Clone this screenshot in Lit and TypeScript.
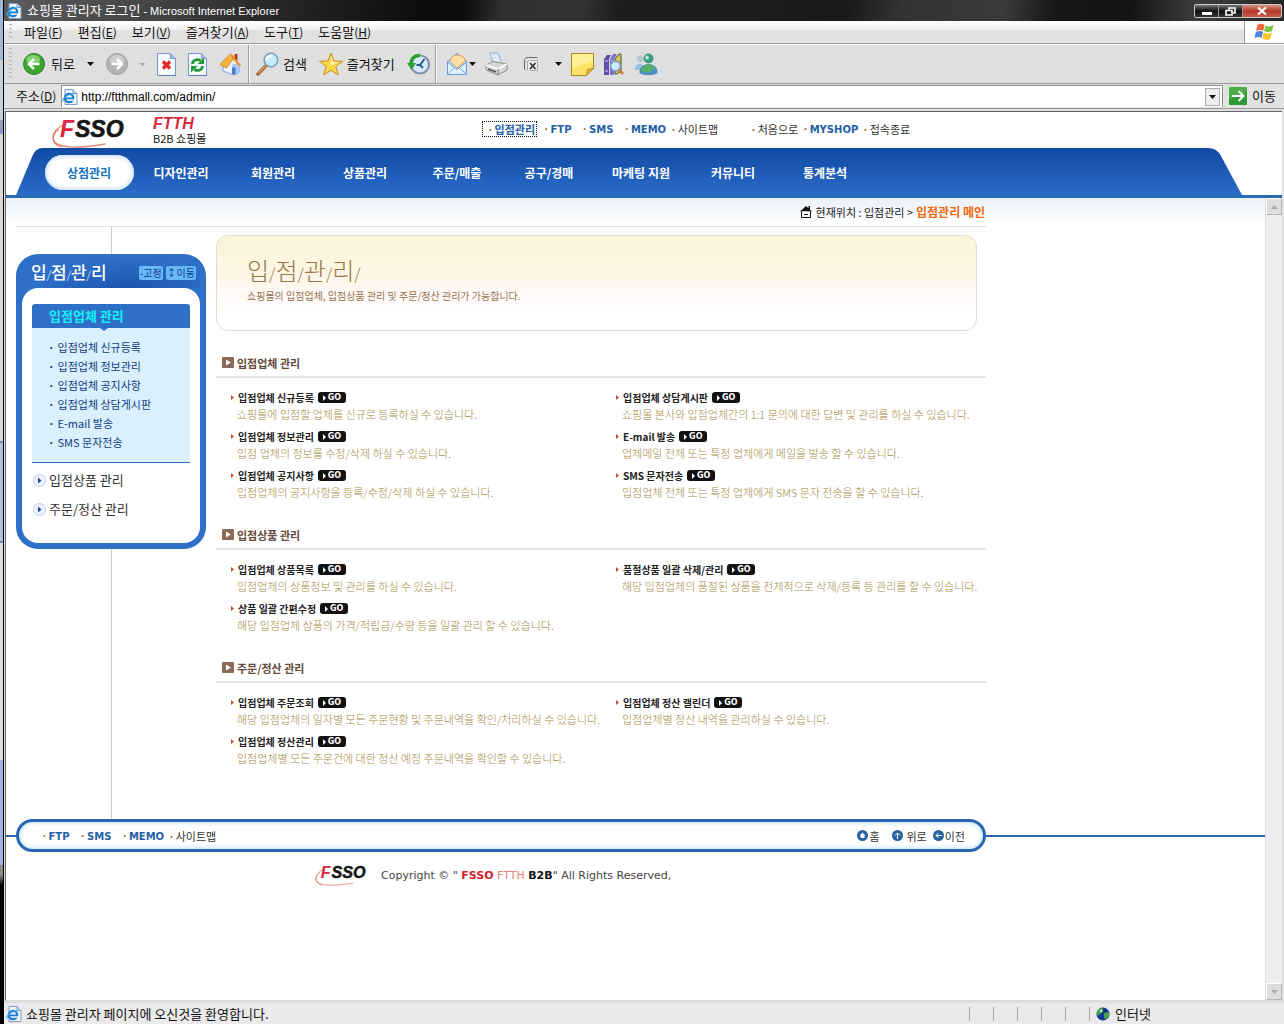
import { LitElement, html, css, svg, TemplateResult } from "lit";
import { customElement } from "lit/decorators.js";

interface Entry { title: string; text: string; }
interface Section { title: string; left: Entry[]; right: Entry[]; }

const SECTIONS: Section[] = [
  {
    title: "입점업체 관리",
    left: [
      { title: "입점업체 신규등록", text: "쇼핑몰에 입점할 업체를 신규로 등록하실 수 있습니다." },
      { title: "입점업체 정보관리", text: "입점 업체의 정보를 수정/삭제 하실 수 있습니다." },
      { title: "입점업체 공지사항", text: "입점업체의 공지사항을 등록/수정/삭제 하실 수 있습니다." },
    ],
    right: [
      { title: "입점업체 상담게시판", text: "쇼핑몰 본사와 입점업체간의 1:1 문의에 대한 답변 및 관리를 하실 수 있습니다." },
      { title: "E-mail 발송", text: "업체메일 전체 또는 특정 업체에게 메일을 발송 할 수 있습니다." },
      { title: "SMS 문자전송", text: "입점업체 전체 또는 특정 업체에게 SMS 문자 전송을 할 수 있습니다." },
    ],
  },
  {
    title: "입점상품 관리",
    left: [
      { title: "입점업체 상품목록", text: "입점업체의 상품정보 및 관리를 하실 수 있습니다." },
      { title: "상품 일괄 간편수정", text: "해당 입점업체 상품의 가격/적립금/수량 등을 일괄 관리 할 수 있습니다." },
    ],
    right: [
      { title: "품절상품 일괄 삭제/관리", text: "해당 입점업체의 품절된 상품을 전체적으로 삭제/등록 등 관리를 할 수 있습니다." },
    ],
  },
  {
    title: "주문/정산 관리",
    left: [
      { title: "입점업체 주문조회", text: "해당 입점업체의 일자별 모든 주문현황 및 주문내역을 확인/처리하실 수 있습니다." },
      { title: "입점업체 정산관리", text: "입점업체별 모든 주문건에 대한 정산 예정 주문내역을 확인할 수 있습니다." },
    ],
    right: [
      { title: "입점업체 정산 캘린더", text: "입점업체별 정산 내역을 관리하실 수 있습니다." },
    ],
  },
];

const MENUS: [string, string][] = [["파일", "F"], ["편집", "E"], ["보기", "V"], ["즐겨찾기", "A"], ["도구", "T"], ["도움말", "H"]];
const NAV = ["상점관리", "디자인관리", "회원관리", "상품관리", "주문/매출", "공구/경매", "마케팅 지원", "커뮤니티", "통계분석"];
const SIDE = ["입점업체 신규등록", "입점업체 정보관리", "입점업체 공지사항", "입점업체 상담게시판", "E-mail 발송", "SMS 문자전송"];

const icon = (w: number, h: number, body: TemplateResult, box = `0 0 ${w} ${h}`) =>
  html`<svg class="icon" width=${w} height=${h} viewBox=${box} aria-hidden="true">${body}</svg>`;

const iePage = icon(16, 16, svg`
  <path d="M3 .5h8l4 4v11H3z" fill="#eef6ff" stroke="#7d9cc9"/><path d="M11 .5v4h4" fill="#b9d0ee" stroke="#7d9cc9"/>
  <circle cx="7" cy="9" r="4.2" fill="none" stroke="#1b7fd0" stroke-width="2.2"/><path d="M3.5 9.4h7.6" stroke="#1b7fd0" stroke-width="1.8"/>
  <path d="M8.5 11h4" stroke="#eef6ff" stroke-width="1.4"/><path d="M.8 12.5C.5 9 7 4.200 13 4.500" fill="none" stroke="#4aa8ea" stroke-width="1.200"/>`);
const back = icon(22, 22, svg`<circle cx="11" cy="11" r="10.500" fill="#3da52f" stroke="#2c8426"/><ellipse cx="10" cy="6.500" rx="7" ry="4.500" fill="#9bdc83" opacity=".75"/>
  <path d="M16.500 11H6.500M11 6l-5 5 5 5" fill="none" stroke="#fff" stroke-width="2.600"/>`);
const forward = icon(22, 22, svg`<circle cx="11" cy="11" r="10.500" fill="#b4b4b4" stroke="#a0a0a0"/><ellipse cx="11" cy="7" rx="7" ry="5" fill="#cfcfcf"/>
  <path d="M5.500 11h10M11 6l5 5-5 5" fill="none" stroke="#fff" stroke-width="2.600"/>`);
const sheet = svg`<path d="M.5.500h13l5 5v17H.5z" fill="#f4f8ff" stroke="#7f93cf"/><path d="M13.500.500v5h5" fill="#a9bdea" stroke="#7f93cf"/><path d="M1 22.500h18" stroke="#5f79c0"/>`;
const stop = icon(19, 23, svg`${sheet}<path d="M6 8.500l7 7M13 8.500l-7 7" stroke="#e2261c" stroke-width="3.200"/>`);
const refresh = icon(19, 23, svg`${sheet}<path d="M4.500 11c0-4 5-5.500 8-3.500M14.500 13c0 4-5 5.500-8 3.500" fill="none" stroke="#1f9a35" stroke-width="2.800"/>
  <path d="M9.500 11h6.500v-6.500zM9.500 13h-6.500v6.500z" fill="#1f9a35"/>`);
const home = icon(23, 24, svg`<path d="M15.500 2h3v6h-3z" fill="#b5402a"/><path d="M4 11l8-7 8 8v9l-6 2-10-4z" fill="#e9f2ff" stroke="#7f9fd6"/>
  <path d="M13 12.500l7-1v10l-6 1.500z" fill="#a8c6f2"/><path d="M.8 12.500L11.500 2l4 3-8 11z" fill="#f7b444" stroke="#d48a25"/><path d="M11.500 2.500L15 4.500l7.300 9-2.300.500-6.500-7z" fill="#f08d2c"/>
  <path d="M13 15.500h3.500V23L13 22z" fill="#4b76c8"/>`);
const search = icon(23, 24, svg`<path d="M10 13.500L2 22" stroke="#a8683a" stroke-width="3.600" stroke-linecap="round"/><path d="M9.500 13.500L2.500 21" stroke="#dba271" stroke-width="1.400"/>
  <circle cx="15" cy="8" r="6.800" fill="#c8ecfb" stroke="#7c9fc2" stroke-width="1.600"/><path d="M10.500 8a5 5 0 015-4.500" stroke="#fff" stroke-width="2" fill="none"/>`);
const star = icon(24, 24, svg`<path d="M12 1l3 8 8.500.300-6.700 5.200L19.300 23 12 18.200 4.700 23l2.500-8.500L.5 9.300 9 9z" fill="#ffd84a" stroke="#c88d1e"/><path d="M12 4l2 6 5 .5-7 3z" fill="#fff2a4"/>`);
const history = icon(23, 23, svg`<circle cx="13" cy="11.500" r="9" fill="#d5eaf9" stroke="#8795a8" stroke-width="2.200"/><path d="M17.500 6L13 12h-3.500M13 12l3 3" fill="none" stroke="#26588f" stroke-width="1.800"/>
  <path d="M13 2.500C7 2 4 6 4 11" fill="none" stroke="#2c9f31" stroke-width="3.600"/><path d="M0 10h9l-4.500 7z" fill="#2c9f31"/>`);
const mail = icon(22, 24, svg`<path d="M1.500 9.500L11 1.500l9.500 8v13h-19z" fill="#bcd9fa" stroke="#6b86c9"/><path d="M4 9c1-5 6-7 11-5 3 1 4 3 4 5l-8 7z" fill="#fde2a8" stroke="#e0a650"/>
  <path d="M1.500 10l9.500 7.500 9.500-7.500v12.500h-19z" fill="#dcefff" stroke="#6b9ade"/><path d="M2 22l7-7M20 22l-7-7" stroke="#7da8e2"/>`);
const printer = icon(23, 24, svg`<path d="M5 1h8l4 10H8z" fill="#dceafc" stroke="#98abd0"/><path d="M1 13l7-3.500L22 12v6l-9 5L1 18z" fill="#d6d6d6" stroke="#8f8f8f"/>
  <path d="M1 13l12 4 9-5" fill="none" stroke="#fff" stroke-width="1.500"/><path d="M13 17v6" stroke="#777"/><path d="M3 17l8 3" stroke="#555" stroke-width="1.500"/>`);
const edit = icon(16, 16, svg`<path d="M1.500 14V5c0-3 1.500-3.500 4-3.500h9" fill="none" stroke="#666"/><path d="M4.500 14V7c0-2 1-2.500 3-2.500h7v10H7" fill="#ececec" stroke="#aaa"/><path d="M7 7l5.500 6M12.500 7L7 13" stroke="#333" stroke-width="1.700"/>`);
const note = icon(23, 23, svg`<path d="M.5.500h22v15l-7 7H.5z" fill="#ffe468" stroke="#a98a20"/><path d="M1 1h21v7L1 15z" fill="#fff2a2" opacity=".8"/><path d="M15.500 22.500l1-6 6-1z" fill="#f0b93c" stroke="#a98a20"/>`);
const books = icon(22, 23, svg`<path d="M1 6l3-4h4L6 6v16H1z" fill="#5d4fb0"/><path d="M7 6l3-5h4l-3 5v16H7z" fill="#7c6fd0"/><path d="M2 8h3M2 18h3M8 8h3" stroke="#d8d2ff"/>
  <path d="M12 6l4-5h2v17l-4 3h-2z" fill="#d8c552" stroke="#4c4a32"/><circle cx="12.500" cy="13" r="5" fill="#cdeafb" stroke="#7293c0" stroke-width="1.500"/><path d="M16 17l4 4" stroke="#c88a3a" stroke-width="3"/>`);
const people = icon(24, 23, svg`<circle cx="6" cy="6" r="3.500" fill="#b9c4cf"/><path d="M1 17c-1-8 10-8 9 0z" fill="#8fc0e2"/><circle cx="14.500" cy="5.500" r="5" fill="#3f9a85"/>
  <path d="M5.500 20c-1-12 19-12 18 0-4 3-14 3-18 0z" fill="#4a90c6"/><path d="M7 18c1-8 11-9 14-3-3 4-9 6-14 3z" fill="#57b06a"/><circle cx="13" cy="4.500" r="2" fill="#b6e3c3"/>`);
const flag = icon(22, 20, svg`<path d="M3.500 3c3-2 5-1 7 0L9.200 9C7 7.700 5 7.500 2 9z" fill="#ee6a3d"/><path d="M11.500 3.500c3 1.500 5 1 8-.5L18 9c-3 1.500-5 1.500-8 0z" fill="#7cc243"/>
  <path d="M1.800 10c3-1.500 5-1 7.200 0L7.500 16c-2-1-4-1.500-7 0z" fill="#4a87df"/><path d="M9.800 10.500c3 1.500 5 1.500 8 0L16.200 17c-3 1.500-5 1-8-.5z" fill="#f9c727"/>`);
const go = icon(18, 18, svg`<rect width="18" height="18" rx="1" fill="#2f9a37"/><path d="M0 0h18v5L0 12z" fill="#6cc060" opacity=".5"/><path d="M3 9h11M9.500 4l5 5-5 5" fill="none" stroke="#fff" stroke-width="2"/>`);
const globe = icon(14, 14, svg`<circle cx="7" cy="7" r="6.500" fill="#12349a"/><path d="M3 2c3-2 5-1 4 2S4 6 3 8 .5 7 .8 5zM8 6l5-1c.5 3-1 6-3 7S8 9 8 6z" fill="#49a83c"/><circle cx="5" cy="4" r="1.200" fill="#b8e6f5"/>`);
const houseMark = icon(12, 12, svg`<path d="M0 5.500L6 0l6 5.500zM8.500 0H10v4H8.500z" fill="#111"/><path d="M1.500 5.500v6h9v-6" fill="#fff" stroke="#111"/><path d="M4 8.500h4" stroke="#111"/>`);
const caret = icon(7, 4, svg`<path d="M0 0h7L3.500 4z" fill="#111"/>`);
const caretDim = icon(5, 3, svg`<path d="M0 0h5L2.500 3z" fill="#a2a2a2"/>`);
const boxArrow = icon(12, 11, svg`<rect width="12" height="11" rx="1" fill="#8b6b58"/><path d="M4 2.500l5 3-5 3z" fill="#fff"/>`);
const roundArrow = icon(13, 13, svg`<circle cx="6.500" cy="6.500" r="6" fill="#eef3ff" stroke="#bccbee"/><path d="M5 3.500l3.500 3L5 9.500z" fill="#20449c"/>`);
const redMark = icon(3, 5, svg`<path d="M0 0l3 2.500L0 5z" fill="#d04a35"/>`);
const dotHome = icon(11, 11, svg`<circle cx="5.500" cy="5.500" r="5.500" fill="#24619f"/><path d="M2.500 5.500l3-3 3 3h-1v2.500h-4V5.500z" fill="#fff"/>`);
const dotUp = icon(11, 11, svg`<circle cx="5.500" cy="5.500" r="5.500" fill="#24619f"/><path d="M5.500 9V3M3 5.500L5.500 3 8 5.500" fill="none" stroke="#fff"/>`);
const dotLeft = icon(11, 11, svg`<circle cx="5.500" cy="5.500" r="5.500" fill="#24619f"/><path d="M9 5.500H3M5.500 3L3 5.500 5.500 8" fill="none" stroke="#fff"/>`);

const fsso = (w: number, h: number) => html`
  <svg class="icon" width=${w} height=${h} viewBox="0 0 76 34" role="img" aria-label="FSSO">
    <path d="M14 7C5 10 0 16 1.500 23c2 8 24 9 52 4" fill="none" stroke="#e58b7d" stroke-width="1.300"/>
    <path d="M7 12C1 16 0 20 2 25c1 2 4 4 8 5" fill="none" stroke="#e0604f" stroke-width="1.200" opacity=".7"/>
    <text x="8" y="20" font-family="Liberation Sans, sans-serif" font-size="23" font-weight="700" font-style="italic"><tspan fill="#de2440">F</tspan><tspan x="23" fill="#151515" stroke="#151515" stroke-width=".6">SSO</tspan></text>
  </svg>`;

@customElement("app-root")
export class AppRoot extends LitElement {
  static styles = css`
    :host { display: block; font-family: "Liberation Sans", "Noto Sans CJK KR", sans-serif; font-size: 13px; line-height: 16px; color: #111; }
    * { box-sizing: border-box; }
    button { font: inherit; color: inherit; background: none; border: 0; padding: 0; margin: 0; }
    a { color: inherit; text-decoration: none; }
    ul, h1, h2, h3, p { margin: 0; padding: 0; list-style: none; font-weight: inherit; font-size: inherit; }
    .icon { display: block; flex: none; }
    .desktop { display: grid; grid-template-columns: 4px 1fr; min-height: 100vh; }
    .edge { border-right: 1px solid #000; background: linear-gradient(#9eb9de 0 60px, #c4cfdf 60px 120px, #8f9cc8 120px 134px, #d9d9d6 134px 441px, #6c8cc8 441px 443px, #a9c3df 443px 541px, #6c8cc8 541px 543px, #dfdfda 543px 760px, #9db5e3 760px 865px, #888 865px 875px, #000 885px); }
    .window { display: flex; flex-direction: column; min-width: 0; background: #dfdfdf; }

    .title { display: flex; align-items: center; height: 21px; padding: 0 2px 0 2px; gap: 5px; color: #fff; font-family: "Noto Sans CJK KR", sans-serif;
      background: linear-gradient(100deg, #5c5c5c 0, #444 12%, #2a2a2a 20%, #0c0c0c 33%, #0c0c0c 36%, #303030 39%, #333 45%, #1d1d1d 48%, #1a1a1a 66%, #333 70%, #3a3a3a 78%, #171717 82%, #141414 88%, #3c3c3c 93%, #262626); }
    .title h1 { flex: 1; white-space: nowrap; }
    .title small { font: 11px/16px "Liberation Sans", sans-serif; }
    .winbtns { display: flex; align-self: flex-start; margin-top: 4px; border: 1px solid #c9c9c9; border-radius: 2px; }
    .winbtns button { width: 24px; height: 12px; display: grid; place-items: center; background: linear-gradient(#777, #111 50%, #333); border-right: 1px solid #999; }
    .winbtns .close { width: 38px; background: linear-gradient(#d89085, #b23a2b 50%, #c95a4a); border: 0; }

    .menu { display: flex; height: 23px; background: linear-gradient(#fff 0, #f4f4f4 8px, #e1e1e1 10px); border-bottom: 1px solid #9c9c9c; font-family: "Noto Sans CJK KR", sans-serif; }
    .grip { width: 3px; margin: 3px 0 3px 5px; background: repeating-linear-gradient(#b5b5b5 0 1px, transparent 1px 4px); }
    .menu ul { flex: 1; display: flex; gap: 15px; padding-left: 12px; align-items: center; }
    .menu .brand { width: 40px; display: grid; place-items: center; background: #fff; border-left: 1px solid #9c9c9c; }
    u { text-underline-offset: 1px; }
    .menu button span { font-size: 12px; }

    .tools { display: flex; align-items: center; height: 40px; border-top: 1px solid #fff; border-bottom: 1px solid #999; font-family: "Noto Sans CJK KR", sans-serif; }
    .tools .grip { align-self: stretch; }
    .group { display: flex; align-items: center; gap: 12px; padding: 0 6px 0 11px; }
    .group.next { padding: 0 5px 0 6px; }
    .group.last { gap: 9px; padding-left: 9px; }
    .tool { display: flex; align-items: center; gap: 4px; }
    .tool.back { gap: 6px; }
    .tool.tight { gap: 1px; }
    .tool.wide { gap: 16px; padding-left: 6px; }
    .sep { width: 2px; align-self: stretch; border-left: 1px solid #9c9c9c; border-right: 1px solid #fff; }

    .address { display: flex; align-items: center; height: 25px; background: #e2e2e2; border-bottom: 1px solid #9a9a9a; font-family: "Noto Sans CJK KR", sans-serif; }
    .address label { padding: 0 5px 0 12px; white-space: nowrap; }
    .address label span { font-size: 12px; }
    .field { flex: 1; min-width: 0; display: flex; align-items: center; gap: 3px; height: 22px; background: #fff; padding: 0 2px 0 0; border: 1px solid #8f8f8f; border-bottom: 0; }
    .field input { flex: 1; min-width: 0; border: 0; outline: 0; padding: 0; background: none; font: 12px/16px "Liberation Sans", sans-serif; color: #000; }
    .field button { width: 15px; height: 18px; display: grid; place-items: center; border: 1px solid #aaa; background: #eee; }
    .go { display: flex; align-items: center; gap: 5px; margin: 0 8px 0 6px; }

    .view { flex: 1; display: flex; flex-direction: column; margin: 2px 2px 0 1px; background: #fff; border: 1px solid #666; border-right: 0; border-bottom-color: #ddd; }
    .head { display: flex; align-items: flex-start; height: 36px; padding-left: 46px; }
    .head .fsso { width: 101px; padding-top: 5px; }
    .mall { width: 330px; padding-top: 4px; font-family: "Noto Sans CJK KR", sans-serif; }
    .mall b { display: block; font: italic 700 16px/16px "Liberation Sans", sans-serif; color: #d9283a; }
    .mall span { display: block; font-size: 11px; line-height: 13px; }
    .links { display: flex; align-items: center; white-space: nowrap; font: 11px/14px "Noto Sans CJK KR", sans-serif; color: #333; }
    .head .links { padding-top: 9px; }
    .links a::before { content: "·"; color: #b2703f; margin-right: 1px; font-weight: 700; }
    .links b { font: 700 10px/14px "DejaVu Sans", sans-serif; color: #245ea6; }
    .links .b { margin-right: 10px; }
    .links .s { margin-right: 4px; }
    .links .gap { margin-right: 32px; }
    .links .focus { outline: 1px dotted #111; color: #245ea6; font-weight: 700; margin-right: 7px; padding: 0 1px 0 4px; }

    .nav { display: flex; height: 50px; border-bottom: 3px solid #2a6bb8; padding: 0 40px 0 10px; }
    .nav ul { flex: 1; display: grid; grid-template-columns: repeat(9, 92px); align-items: center; padding-top: 2px; background: linear-gradient(#1149a2, #2a6cca); color: #fff; font: 700 12px/18px "Noto Sans CJK KR", sans-serif; }
    .nav li { text-align: center; }
    .nav a { display: inline-block; white-space: nowrap; }
    .nav .on { width: 89px; line-height: 35px; border-radius: 18px; background: #fff; color: #1672c0; box-shadow: inset 0 0 4px 1px #b6d2f6; }

    .pane { flex: 1; display: flex; }
    .scroll { flex: 1; min-width: 0; background: linear-gradient(#ebf1f9, #fff 26px); }
    .bar { width: 17px; display: flex; flex-direction: column; justify-content: space-between; background: #ededed; border-left: 1px solid #e0e0e0; }
    .bar button { height: 17px; display: grid; place-items: center; border: 1px solid #b5b5b5; border-top-color: #fff; border-left-color: #fff; background: #dedede; }
    .page { max-width: 980px; padding-left: 10px; }
    .crumbs { display: flex; justify-content: flex-end; align-items: center; height: 29px; padding-right: 1px; border-bottom: 1px solid #dcdfe0; font: 11px/16px "Noto Sans CJK KR", sans-serif; color: #222; }
    .crumbs .icon { margin-right: 4px; }
    .crumbs b { margin-left: 3px; font-size: 12px; color: #f0690c; }
    .cols { display: flex; gap: 10px; }
    .rail { width: 190px; display: flex; flex-direction: column; }
    .pole { height: 27px; width: 1px; background: #ccc; margin-left: 95px; }
    .pole.rest { flex: 1; height: auto; }
    .side { padding: 0 6px 6px; border-radius: 22px; background: #2e6fc8; font-family: "Noto Sans CJK KR", sans-serif; }
    .sidehead { display: flex; align-items: center; height: 34px; padding: 4px 4px 0 9px; color: #fff; background: radial-gradient(ellipse at 60% 100%, #1a55af, transparent 60%); }
    .sidehead h2 { flex: 1; font-size: 17px; font-weight: 500; white-space: nowrap; }
    .sidehead i { font: 300 11px/16px "Noto Sans CJK KR", sans-serif; }
    .chips { display: flex; gap: 3px; }
    .chips button { background: #68b8f7; color: #0b3f91; font-size: 10px; line-height: 14px; border-radius: 2px; padding: 0 1px; white-space: nowrap; }
    .box { background: #fff; border-radius: 16px; padding: 16px 10px 26px; }
    .box h3 { background: #2e6fc8; color: #14f0f7; font-weight: 700; line-height: 24px; padding-left: 17px; border-radius: 3px 3px 0 0; }
    .list { position: relative; background: #dbf0fe; border-bottom: 1px solid #2e6fc8; padding: 10px 0 10px 16px; font-size: 11px; line-height: 19px; color: #123d80; }
    .list::before { content: ""; position: absolute; left: 68px; top: 0; border: 4px solid transparent; border-top: 3px solid #2e6fc8; }
    .list a::before { content: "·"; margin-right: 3px; font-weight: 700; }
    .more { display: flex; align-items: center; gap: 3px; padding: 9px 0 0 1px; line-height: 16px; color: #333; }
    .more + .more { padding-top: 13px; }

    .main { flex: 1; min-width: 0; padding: 8px 0 52px; font-family: "Noto Sans CJK KR", sans-serif; }
    .banner { height: 96px; margin-right: 9px; padding: 17px 30px; border: 1px solid #e0ddd0; border-radius: 12px; background: linear-gradient(#fbf4da, #fdf6e2 40%, #fff9f8 60%, #fff 85%); color: #95744c; }
    .banner h2 { font-size: 24px; line-height: 34px; font-weight: 300; white-space: nowrap; }
    .banner i { font: 300 16px/20px "Noto Sans CJK KR", sans-serif; }
    .banner p { font-size: 10px; line-height: 18px; }
    .section { margin-top: 24px; }
    .banner + .section { margin-top: 22px; }
    .section h3 { display: flex; align-items: center; gap: 3px; height: 25px; padding: 0 0 4px 6px; border-bottom: 2px solid #e6e6e6; font-size: 11px; font-weight: 700; color: #654b3d; }
    .grid { display: grid; grid-template-columns: 1fr 1fr; padding-top: 11px; }
    .grid ul { display: flex; flex-direction: column; gap: 5px; padding-left: 15px; min-width: 0; }
    .line { display: flex; align-items: center; height: 17px; gap: 4px; font-size: 10px; font-weight: 700; color: #222; }
    .chip { display: flex; align-items: center; justify-content: center; gap: 2px; height: 11px; width: 28px; border-radius: 3px; background: #111; color: #fff; font: 700 8px/11px "DejaVu Sans", sans-serif; }
    .desc { padding-left: 6px; font-size: 11px; line-height: 17px; font-weight: 300; color: #a58b45; white-space: nowrap; }

    .foot { display: flex; align-items: center; background: linear-gradient(#fff 16px, #2d68a8 16px 18px, #fff 18px); }
    .pill { flex: 0 1 970px; margin-left: 10px; height: 33px; display: flex; align-items: center; justify-content: space-between; padding: 0 18px 0 22px; border: 3px solid #2a67b2; border-radius: 17px; background: #fff; box-shadow: inset 0 0 4px 1px #bfe0fa; }
    .acts { display: flex; gap: 6px; font: 11px/14px "Noto Sans CJK KR", sans-serif; color: #333; }
    .acts a { display: flex; align-items: center; gap: 1px; }
    .acts .up { gap: 4px; margin-left: 6px; }
    .copy { display: flex; align-items: center; gap: 12px; max-width: 980px; padding: 12px 0 0 309px; font: 11px/16px "DejaVu Sans", sans-serif; color: #444; white-space: nowrap; }
    .copy .r { color: #d5222c; } .copy .p { color: #ee8176; font-weight: 400; } .copy .k { color: #111; }

    .status { display: flex; align-items: center; height: 21px; padding-left: 2px; margin-top: 2px; gap: 4px; background: #eaeaea; font-family: "Noto Sans CJK KR", sans-serif; }
    .status p { flex: 1; }
    .cells { display: flex; height: 14px; }
    .cells span { width: 24px; border-left: 1px solid #aaa; }
    .cells span:last-child { width: 1px; }
    .zone { display: flex; align-items: center; gap: 5px; width: 190px; padding-left: 2px; }
  `;

  private links(withAdmin: boolean) {
    return html`
      ${withAdmin ? html`<a class="focus" href="#">입점관리</a>` : ""}
      <a class="b" href="#"><b>FTP</b></a><a class="b" href="#"><b>SMS</b></a><a class="s" href="#"><b>MEMO</b></a><a class=${withAdmin ? "gap" : ""} href="#">사이트맵</a>
      ${withAdmin ? html`<a class="s" href="#">처음으로</a><a class="s" href="#"><b>MYSHOP</b></a><a href="#">접속종료</a>` : ""}`;
  }

  private entry(e: Entry) {
    return html`<li>
      <div class="line">${redMark}<span>${e.title}</span><a class="chip" href="#">${icon(3, 6, svg`<path d="M0 0l3 3-3 3z" fill="#fff"/>`)}GO</a></div>
      <p class="desc">${e.text}</p>
    </li>`;
  }

  render() {
    return html`<div class="desktop"><div class="edge"></div><div class="window">
      <header class="title">${iePage}<h1>쇼핑몰 관리자 로그인 <small>- Microsoft Internet Explorer</small></h1>
        <div class="winbtns">
          <button aria-label="최소화">${icon(10, 8, svg`<path d="M0 5h10v3H0z" fill="#fff"/>`)}</button>
          <button aria-label="이전 크기로">${icon(11, 9, svg`<path d="M4 3V1h6v5H8M1 3.500h6V8H1z" fill="none" stroke="#fff" stroke-width="1.600"/>`)}</button>
          <button class="close" aria-label="닫기">${icon(10, 8, svg`<path d="M1 .5l8 7M9 .5l-8 7" stroke="#fff" stroke-width="2.200"/>`)}</button>
        </div></header>
      <nav class="menu"><div class="grip"></div><ul>${MENUS.map(([t, k]) => html`<li><button>${t}<span>(<u>${k}</u>)</span></button></li>`)}</ul><div class="brand">${flag}</div></nav>
      <div class="tools"><div class="grip"></div>
        <div class="group"><button class="tool back">${back}뒤로</button><button aria-label="뒤로 목록">${caret}</button><button aria-label="앞으로">${forward}</button><button aria-label="앞으로 목록">${caretDim}</button>
          <button aria-label="중지">${stop}</button><button aria-label="새로 고침">${refresh}</button><button aria-label="홈">${home}</button></div>
        <div class="sep"></div>
        <div class="group next"><button class="tool">${search}검색</button><button class="tool">${star}즐겨찾기</button><button aria-label="목록">${history}</button></div>
        <div class="sep"></div>
        <div class="group last"><button class="tool tight" aria-label="메일">${mail}${caret}</button><button aria-label="인쇄">${printer}</button><button class="tool wide" aria-label="편집">${edit}${caret}</button>
          <button aria-label="메모">${note}</button><button aria-label="리서치">${books}</button><button aria-label="메신저">${people}</button></div>
      </div>
      <div class="address"><label for="url">주소<span>(<u>D</u>)</span></label>
        <div class="field">${iePage}<input id="url" type="text" value="http://ftthmall.com/admin/" /><button aria-label="주소 목록">${caret}</button></div>
        <button class="go">${go}이동</button></div>

      <div class="view">
        <div class="head"><a class="fsso" href="#">${fsso(76, 34)}</a><div class="mall"><b>FTTH</b><span>B2B 쇼핑몰</span></div><div class="links">${this.links(true)}</div></div>
        <nav class="nav">
          <svg class="icon" width="27" height="47" viewBox="0 0 27 47"><defs><linearGradient id="l" x2="0" y2="1"><stop stop-color="#1149a2"/><stop offset="1" stop-color="#2a6cca"/></linearGradient></defs><path d="M0 47L16 9Q19 0 27 0v47z" fill="url(#l)"/></svg>
          <ul>${NAV.map((n, i) => html`<li><a class=${i === 0 ? "on" : ""} href="#">${n}</a></li>`)}</ul>
          <svg class="icon" width="40" height="47" viewBox="0 0 40 47"><defs><linearGradient id="r" x2="0" y2="1"><stop stop-color="#1149a2"/><stop offset="1" stop-color="#2a6cca"/></linearGradient></defs><path d="M0 0h6q9 0 13 8l21 39H0z" fill="url(#r)"/></svg>
        </nav>
        <div class="pane"><div class="scroll">
          <div class="page">
            <div class="crumbs">${houseMark}현재위치 : 입점관리 &gt; <b>입점관리 메인</b></div>
            <div class="cols">
              <aside class="rail"><div class="pole"></div>
                <div class="side"><div class="sidehead"><h2>입<i>/</i>점<i>/</i>관<i>/</i>리</h2><div class="chips"><button>-고정</button><button>↕이동</button></div></div>
                  <div class="box"><h3>입점업체 관리</h3><ul class="list">${SIDE.map((s) => html`<li><a href="#">${s}</a></li>`)}</ul>
                    <a class="more" href="#">${roundArrow}입점상품 관리</a><a class="more" href="#">${roundArrow}주문/정산 관리</a></div></div>
                <div class="pole rest"></div></aside>
              <main class="main">
                <div class="banner"><h2>입<i>/</i>점<i>/</i>관<i>/</i>리<i>/</i></h2><p>쇼핑몰의 입점업체, 입점상품 관리 및 주문/정산 관리가 가능합니다.</p></div>
                ${SECTIONS.map((s) => html`<section class="section"><h3>${boxArrow}${s.title}</h3>
                  <div class="grid"><ul>${s.left.map((e) => this.entry(e))}</ul><ul>${s.right.map((e) => this.entry(e))}</ul></div></section>`)}
              </main>
            </div>
          </div>
          <footer><div class="foot"><div class="pill"><div class="links">${this.links(false)}</div>
            <div class="acts"><a href="#">${dotHome}홈</a><a class="up" href="#">${dotUp}위로</a><a href="#">${dotLeft}이전</a></div></div></div>
            <div class="copy">${fsso(54, 24)}<span>Copyright © " <b class="r">FSSO</b> <b class="p">FTTH</b> <b class="k">B2B</b>" All Rights Reserved,</span></div></footer>
        </div>
        <div class="bar"><button aria-label="위로">${icon(7, 4, svg`<path d="M0 4h7L3.500 0z" fill="#aaa"/>`)}</button><button aria-label="아래로">${icon(7, 4, svg`<path d="M0 0h7L3.500 4z" fill="#aaa"/>`)}</button></div></div>
      </div>
      <footer class="status">${iePage}<p>쇼핑몰 관리자 페이지에 오신것을 환영합니다.</p><div class="cells"><span></span><span></span><span></span><span></span><span></span><span></span></div>
        <div class="zone">${globe}인터넷</div></footer>
    </div></div>`;
  }
}
